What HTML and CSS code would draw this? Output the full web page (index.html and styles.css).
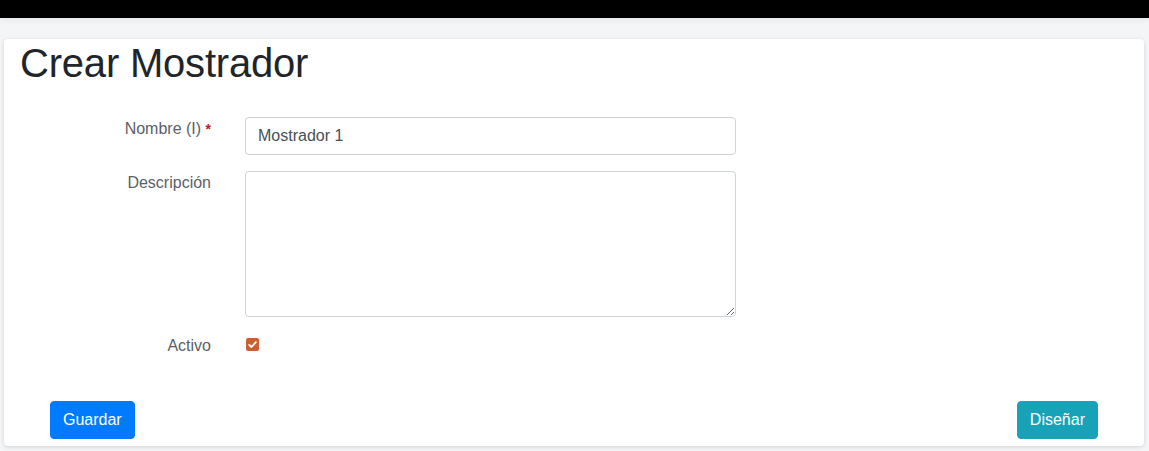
FILE: index.html
```html
<!DOCTYPE html>
<html lang="es">
<head>
<meta charset="utf-8">
<title>Crear Mostrador</title>
<link rel="stylesheet" href="styles.css">
</head>
<body>
<div class="topbar"></div>
<main class="card">
  <h1 class="title">Crear Mostrador</h1>
  <form class="form">
    <label class="label" for="nombre">Nombre (I) <span class="req">*</span></label>
    <input class="control" id="nombre" type="text" value="Mostrador 1">
    <label class="label" for="desc">Descripción</label>
    <textarea class="control area" id="desc"></textarea>
    <label class="label label-check">Activo</label>
    <div class="check-wrap">
      <span class="check">
        <svg width="13" height="13" viewBox="0 0 13 13"><path d="M3.2 6.8 L5.5 9 L9.9 4.2" fill="none" stroke="#fff" stroke-width="1.8" stroke-linecap="round" stroke-linejoin="round"/></svg>
      </span>
    </div>
  </form>
  <div class="actions">
    <button class="btn btn-primary" type="button">Guardar</button>
    <button class="btn btn-info" type="button">Diseñar</button>
  </div>
</main>
</body>
</html>
```

FILE: styles.css
```css
* { box-sizing: border-box; }
html, body { margin: 0; padding: 0; }
body {
  background: #f4f5f7;
  font-family: "Liberation Sans", Arial, sans-serif;
  font-size: 16px;
  line-height: 24px;
  color: #212529;
  overflow: hidden;
  height: 451px;
}
.topbar {
  height: 18px;
  background: #000;
  box-shadow: 0 2px 6px rgba(0,0,0,0.06);
}
.card {
  margin: 21px 5px 0 4px;
  background: #fff;
  border-radius: 4px;
  box-shadow: 0 1px 4px rgba(0,0,0,0.14);
  padding: 0 16px 7px 16px;
}
.title {
  margin: 0;
  font-size: 40px;
  line-height: 48px;
  font-weight: 400;
  letter-spacing: -0.2px;
  color: #212529;
}
.form {
  margin-top: 30px;
  display: grid;
  grid-template-columns: 191px 491px;
  column-gap: 34px;
  row-gap: 16px;
}
.label {
  text-align: right;
  color: #5b6066;
  line-height: 24px;
}
.label-check { padding-top: 1px; }
.req {
  color: #c0161b;
  font-weight: 700;
  font-size: 14px;
}
.control {
  display: block;
  width: 491px;
  height: 38px;
  padding: 6px 12px;
  font-family: inherit;
  font-size: 16px;
  line-height: 24px;
  color: #495057;
  background: #fff;
  border: 1px solid #ced4da;
  border-radius: 4px;
  margin: 0;
}
.area {
  height: 146px;
  resize: vertical;
}
.check-wrap {
  height: 24px;
  padding-top: 5px;
  padding-left: 1px;
}
.check {
  display: block;
  width: 13px;
  height: 13px;
  border-radius: 2px;
  background: #cb5f30;
}
.check svg { display: block; }
.actions {
  margin-top: 43px;
  padding: 0 30px;
  display: flex;
  justify-content: space-between;
}
.btn {
  height: 38px;
  padding: 6px 12px;
  font-family: inherit;
  font-size: 16px;
  line-height: 24px;
  color: #fff;
  border: 1px solid transparent;
  border-radius: 4px;
  cursor: pointer;
}
.btn-primary { background: #007bff; border-color: #007bff; }
.btn-info { background: #17a2b8; border-color: #17a2b8; }
```
